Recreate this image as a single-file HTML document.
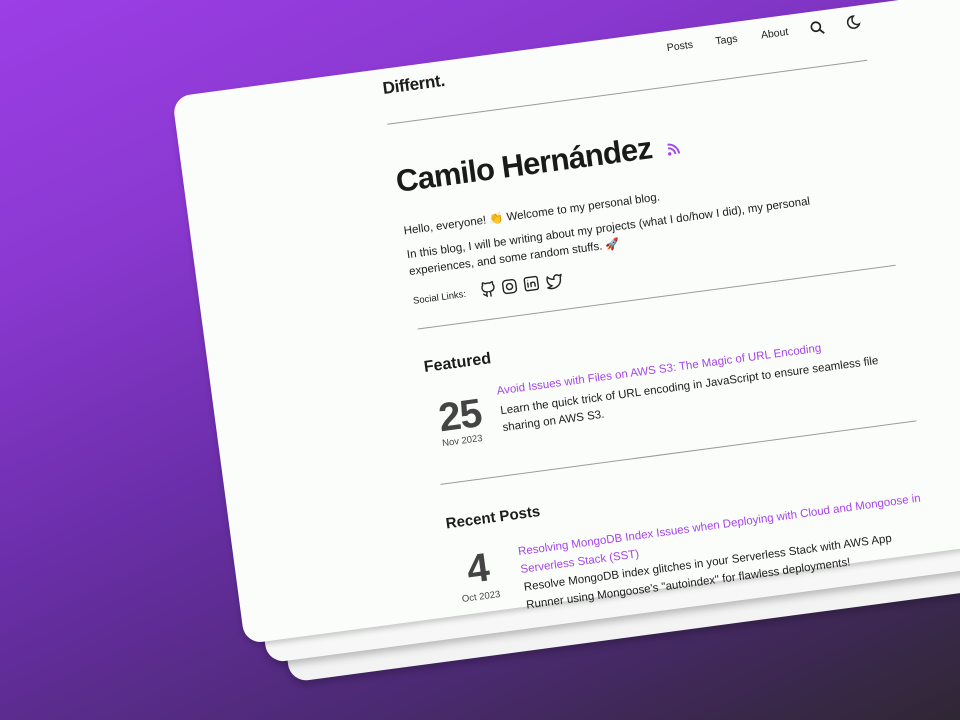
<!DOCTYPE html>
<html><head><meta charset="utf-8"><style>
html,body{margin:0;padding:0;width:960px;height:720px;overflow:hidden}
body{background:linear-gradient(155deg,#9c3fe6 0%,#8a38d0 25%,#6a2ea8 50%,#4c2a74 75%,#2f2733 100%);font-family:"Liberation Sans",sans-serif;position:relative}
.wrap{position:absolute;left:172px;top:97px;transform-origin:0 0;transform:rotate(-7.6deg);width:960px;height:600px}
.card{position:absolute;width:960px;height:552px;border-radius:18px;background:#fbfdfb;box-shadow:0 4px 8px rgba(0,0,0,.25)}
.a{position:absolute;white-space:nowrap;color:#1c1c1c}
.line{position:absolute;height:1px;background:#9a9a9a}
.link{color:#a545e8}
svg{display:block}
</style></head><body>
<div class="wrap">
  <div class="card" style="left:40px;top:44px;background:#f2f3f2"></div>
  <div class="card" style="left:20px;top:22px;background:#f6f7f6"></div>
  <div class="card" style="left:0;top:0;box-shadow:0 3px 6px rgba(0,0,0,.2)"></div>

  <div class="a" style="left:210px;top:10px;font-size:17px;font-weight:bold;letter-spacing:-.3px">Differnt.</div>
  <div class="a" style="left:497px;top:11px;font-size:10.5px">Posts</div>
  <div class="a" style="left:546px;top:11px;font-size:10.5px">Tags</div>
  <div class="a" style="left:592px;top:11px;font-size:10.5px">About</div>
  <svg class="a" style="left:641px;top:9px" width="16" height="16" viewBox="0 0 16 16"><circle cx="6.5" cy="6.5" r="4.5" fill="none" stroke="#222" stroke-width="1.7"/><path d="M10 10l4 4" stroke="#222" stroke-width="1.8"/></svg>
  <svg class="a" style="left:677px;top:8px" width="16" height="16" viewBox="0 0 16 16"><path d="M9 2a6 6 0 1 0 5 8.5A5 5 0 0 1 9 2z" fill="none" stroke="#222" stroke-width="1.5"/></svg>
  <div class="line" style="left:210px;top:55px;width:484px"></div>

  <div class="a" style="left:211px;top:96px;font-size:31px;font-weight:bold;letter-spacing:-.8px;color:#1a1a1a">Camilo Hernández</div>
  <svg class="a" style="left:483px;top:110px" width="15" height="15" viewBox="0 0 16 16"><circle cx="3" cy="13" r="1.8" fill="#a545e8"/><path d="M2 7a7 7 0 0 1 7 7M2 3a11 11 0 0 1 11 11" fill="none" stroke="#a545e8" stroke-width="2"/></svg>

  <div class="a" style="left:212px;top:156px;font-size:11.5px">Hello, everyone! 👏 Welcome to my personal blog.</div>
  <div class="a" style="left:212px;top:180px;font-size:11.5px;line-height:17px">In this blog, I will be writing about my projects (what I do/how I did), my personal<br>experiences, and some random stuffs. 🚀</div>
  <div class="a" style="left:212px;top:229px;font-size:9.5px">Social Links:</div>
  <svg class="a" style="left:280px;top:224px" width="90" height="18" viewBox="0 0 90 18" fill="none" stroke="#222" stroke-width="1.4">
    <path d="M6 16v-3c0-1 .3-1.6.8-2C4 10.7 2 9.6 2 6.5c0-1 .4-2 1-2.6-.1-.4-.3-1.4.1-2.5 0 0 1 0 2.6 1.1a8 8 0 0 1 4.6 0C11.9 1.4 12.9 1.4 12.9 1.4c.4 1.1.2 2.1.1 2.5.6.6 1 1.6 1 2.6 0 3.1-2 4.2-4.8 4.5.5.4.8 1.100.8 2V16M6 14c-2.5.7-2.5-1.3-3.5-1.6"/>
    <rect x="23" y="2" width="13" height="13" rx="3.5"/><circle cx="29.5" cy="8.5" r="3"/>
    <rect x="45" y="2" width="13" height="13" rx="2"/><path d="M48 7v5M48 5v.5M51 12V7M51 9c0-2 4-2.5 4 0v3"/>
    <path d="M82 3.5c-.8.4-1.6.6-2.3.7a3 3 0 0 0-5.2 2.3v.7c-2.6 0-4.7-1.2-6.300-3 0 0-2.8 6.4 3.5 9.2-1.4 1-3 1.5-4.7 1.4 6.3 3.5 14 0 14-8.1 0-.2 0-.5-.1-.7.7-.7 1.1-1.5 1.1-2.5z"/>
  </svg>
  <div class="line" style="left:213px;top:262px;width:482px"></div>

  <div class="a" style="left:214px;top:293px;font-size:16px;font-weight:bold">Featured</div>
  <div class="a" style="left:222px;top:332px;font-size:40px;font-weight:bold;color:#444;letter-spacing:-1px">25</div>
  <div class="a" style="left:222px;top:374px;font-size:9.5px;color:#444">Nov 2023</div>
  <div class="a link" style="left:283px;top:329px;font-size:11.5px">Avoid Issues with Files on AWS S3: The Magic of URL Encoding</div>
  <div class="a" style="left:284px;top:347px;font-size:11.5px;line-height:17px">Learn the quick trick of URL encoding in JavaScript to ensure seamless file<br>sharing on AWS S3.</div>
  <div class="line" style="left:215px;top:419px;width:480px"></div>

  <div class="a" style="left:215px;top:451px;font-size:15px;font-weight:bold">Recent Posts</div>
  <div class="a" style="left:230px;top:486px;font-size:40px;font-weight:bold;color:#444">4</div>
  <div class="a" style="left:221px;top:531px;font-size:9.5px;color:#444">Oct 2023</div>
  <div class="a link" style="left:283px;top:488px;font-size:11.5px;line-height:18px">Resolving MongoDB Index Issues when Deploying with Cloud and Mongoose in<br>Serverless Stack (SST)</div>
  <div class="a" style="left:284px;top:524px;font-size:11.5px;line-height:18px">Resolve MongoDB index glitches in your Serverless Stack with AWS App<br>Runner using Mongoose's "autoindex" for flawless deployments!</div>
</div>
</body></html>
